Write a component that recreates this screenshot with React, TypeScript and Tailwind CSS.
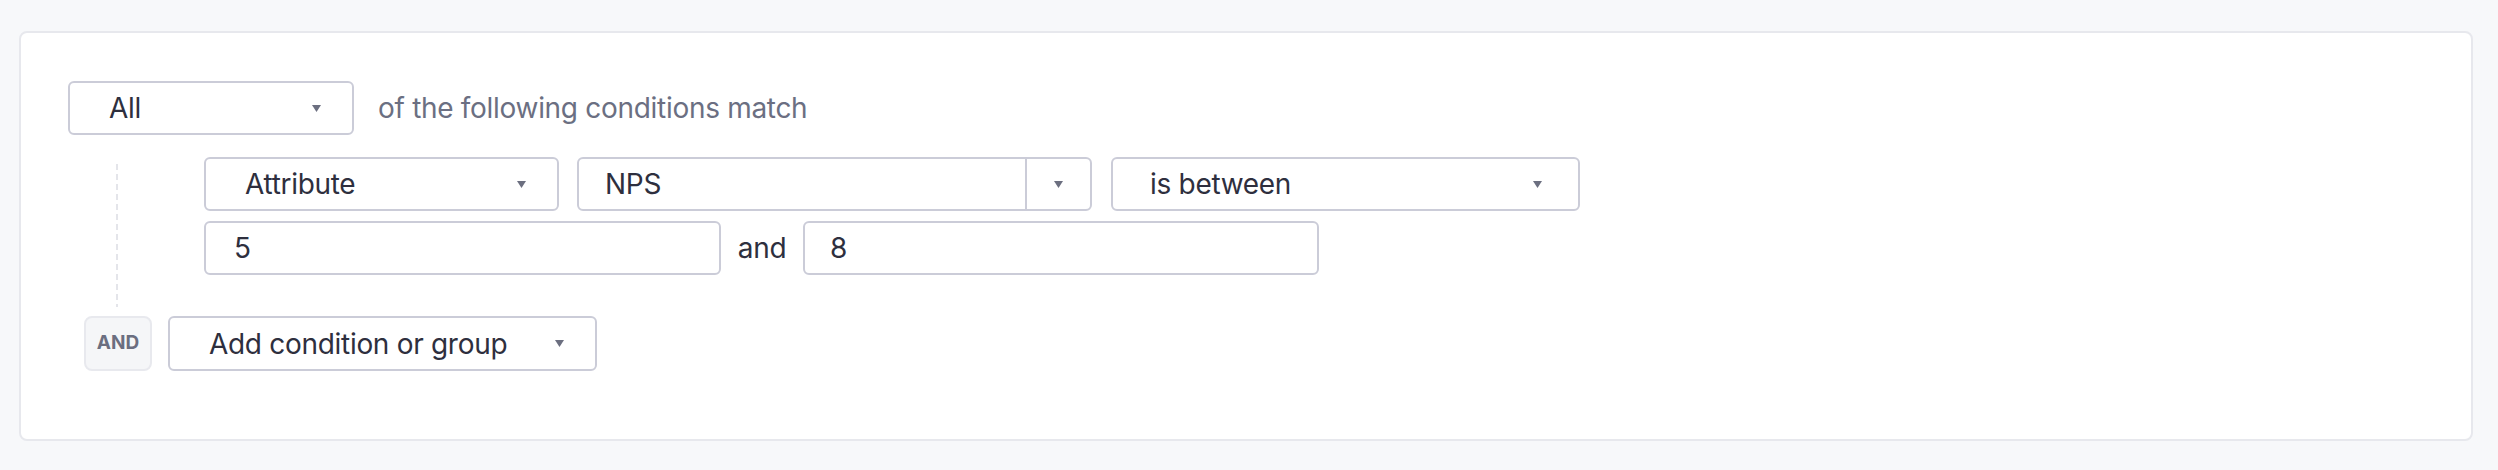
import React from 'react';

const Caret = () => (
  <svg width="9" height="7" viewBox="0 0 9 7" className="shrink-0">
    <polygon points="0,0 9,0 4.5,7" fill="#6c6f80" />
  </svg>
);

interface SelectProps {
  label: string;
  width: string;
  padLeft: string;
  padRight: string;
}

const Select: React.FC<SelectProps> = ({ label, width, padLeft, padRight }) => (
  <div
    className={`${width} ${padLeft} ${padRight} h-[54px] shrink-0 flex items-center justify-between bg-white border-2 border-[#cbccd8] rounded-[6px] text-[28px] text-[#2e2f3e]`}
  >
    <span>{label}</span>
    <Caret />
  </div>
);

export default function App() {
  return (
    <div
      className="min-h-[470px] w-[2498px] bg-[#f7f8fa] pt-[31px] pl-[19px] tracking-[-0.3px]"
      style={{ fontFamily: 'Inter, "Noto Sans", sans-serif' }}
    >
      <div className="w-[2454px] h-[410px] bg-white border-2 border-[#e7e8ed] rounded-[8px] pt-[48px] pl-[47px]">
        {/* Match mode */}
        <div className="flex items-center">
          <Select label="All" width="w-[286px]" padLeft="pl-[39px]" padRight="pr-[31px]" />
          <span className="ml-[24px] text-[28px] text-[#6b6f82]">of the following conditions match</span>
        </div>

        {/* Condition group */}
        <div className="flex mt-[22px]">
          <div className="ml-[48px] mt-[7px] w-[2px] h-[143px] shrink-0 bg-[repeating-linear-gradient(to_bottom,#e4e5ea_0px,#e4e5ea_6px,transparent_6px,transparent_10px)]"></div>
          <div className="ml-[86px] flex flex-col gap-[10px]">
            <div className="flex items-center gap-[18px]">
              <Select label="Attribute" width="w-[355px]" padLeft="pl-[39px]" padRight="pr-[31px]" />
              <div className="w-[515px] h-[54px] flex bg-white border-2 border-[#cbccd8] rounded-[6px] text-[28px] text-[#2e2f3e]">
                <div className="flex-1 flex items-center pl-[26px]">NPS</div>
                <div className="w-[65px] flex items-center justify-center border-l-2 border-[#cbccd8]">
                  <Caret />
                </div>
              </div>
              <div className="ml-[1px]">
                <Select label="is between" width="w-[469px]" padLeft="pl-[37px]" padRight="pr-[36px]" />
              </div>
            </div>
            <div className="flex items-center">
              <div className="w-[517px] h-[54px] flex items-center pl-[28px] bg-white border-2 border-[#cbccd8] rounded-[6px] text-[28px] text-[#2e2f3e]">
                5
              </div>
              <span className="w-[82px] text-center text-[28px] text-[#2e2f3e]">and</span>
              <div className="w-[516px] h-[54px] flex items-center pl-[25px] bg-white border-2 border-[#cbccd8] rounded-[6px] text-[28px] text-[#2e2f3e]">
                8
              </div>
            </div>
          </div>
        </div>

        {/* Add row */}
        <div className="flex items-center mt-[9px] ml-[16px] gap-[16px]">
          <div className="w-[68px] h-[55px] flex items-center justify-center bg-[#f5f6f8] border-2 border-[#e8e9ee] rounded-[8px] text-[19px] font-bold tracking-normal text-[#6b6e80]">
            AND
          </div>
          <div className="w-[429px] h-[55px] flex items-center justify-between pl-[39px] pr-[31px] bg-white border-2 border-[#cbccd8] rounded-[6px] text-[28px] text-[#2e2f3e]">
            <span>Add condition or group</span>
            <Caret />
          </div>
        </div>
      </div>
    </div>
  );
}
